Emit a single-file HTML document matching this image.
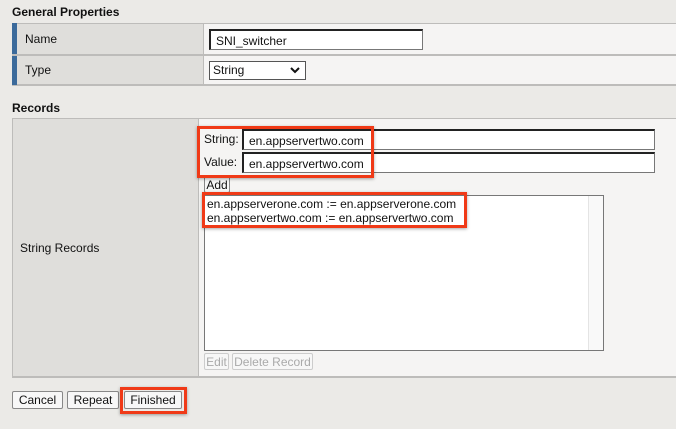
<!DOCTYPE html>
<html><head><style>
*{box-sizing:border-box;margin:0;padding:0}
body{width:676px;height:429px;background:#ebeae7;font-family:"Liberation Sans",Arial,sans-serif;font-size:12px;color:#111;position:relative;overflow:hidden}
.a{position:absolute}
h3{position:absolute;font-size:12px;font-weight:bold}
.lab{background:#dfdedb}
.val{background:#f5f4f3}
.inp{position:absolute;background:#fff;border:1px solid #777;border-top:2px solid #222;border-left:2px solid #222;padding-left:5px;line-height:16px;font-size:12px}
.btn{position:absolute;background:#f7f7f7;border:1px solid #888;border-radius:2px;text-align:center;line-height:16px;font-size:12px}
.red{position:absolute;border:3px solid #f03a17;box-shadow:0 1px 3px rgba(0,0,0,.35)}
</style></head><body>
<h3 style="left:12px;top:5px">General Properties</h3>
<div class="a" style="left:12px;top:23px;width:664px;height:63px;background:#bdbcba"></div>
<div class="a lab" style="left:17px;top:24px;width:186px;height:30px"></div>
<div class="a val" style="left:204px;top:24px;width:472px;height:30px"></div>
<div class="a lab" style="left:17px;top:56px;width:186px;height:28px"></div>
<div class="a val" style="left:204px;top:56px;width:472px;height:28px"></div>
<div class="a" style="left:12px;top:23px;width:5px;height:62px;background:#3b6a9b"></div>
<div class="a" style="left:12px;top:54px;width:5px;height:2px;background:#bdbcba"></div>
<div class="a" style="left:25px;top:32px">Name</div>
<div class="a" style="left:25px;top:63px">Type</div>
<div class="inp" style="left:209px;top:29px;width:214px;height:21px;padding-top:2px">SNI_switcher</div>
<div class="a" style="left:209px;top:61px;width:97px;height:19px;background:#fff;border:1px solid #555;padding:1px 3px">String<svg style="position:absolute;right:5px;top:5px" width="10" height="7"><path d="M1 1L5 5L9 1" stroke="#111" stroke-width="2" fill="none"/></svg></div>
<h3 style="left:12px;top:101px">Records</h3>
<div class="a" style="left:12px;top:118px;width:664px;height:260px;background:#bdbcba"></div>
<div class="a lab" style="left:13px;top:119px;width:185px;height:257px"></div>
<div class="a val" style="left:199px;top:119px;width:477px;height:257px"></div>
<div class="a" style="left:20px;top:241px">String Records</div>
<div class="a" style="left:204px;top:132px">String:</div>
<div class="a" style="left:204px;top:155px">Value:</div>
<div class="inp" style="left:242px;top:129px;width:413px;height:21px;padding-top:2px">en.appservertwo.com</div>
<div class="inp" style="left:242px;top:152px;width:413px;height:21px;padding-top:2px">en.appservertwo.com</div>
<div class="btn" style="left:204px;top:176px;width:26px;height:17px">Add</div>
<div class="a" style="left:204px;top:195px;width:400px;height:156px;background:#fff;border:1px solid #777"></div>
<div class="a" style="left:588px;top:196px;width:15px;height:154px;background:#f9f9f9;border-left:1px solid #e4e4e4"></div>
<div class="a" style="left:207px;top:197px;line-height:14px">en.appserverone.com := en.appserverone.com<br>en.appservertwo.com := en.appservertwo.com</div>
<div class="btn" style="left:204px;top:353px;width:25px;height:17px;color:#aaa;border-color:#ccc">Edit</div>
<div class="btn" style="left:232px;top:353px;width:81px;height:17px;color:#aaa;border-color:#ccc">Delete Record</div>
<div class="btn" style="left:12px;top:391px;width:51px;height:18px">Cancel</div>
<div class="btn" style="left:67px;top:391px;width:52px;height:18px">Repeat</div>
<div class="btn" style="left:124px;top:391px;width:58px;height:18px">Finished</div>
<div class="red" style="left:197px;top:126px;width:177px;height:52px"></div>
<div class="red" style="left:202px;top:192px;width:265px;height:36px"></div>
<div class="red" style="left:120px;top:387px;width:67px;height:27px"></div>
</body></html>
